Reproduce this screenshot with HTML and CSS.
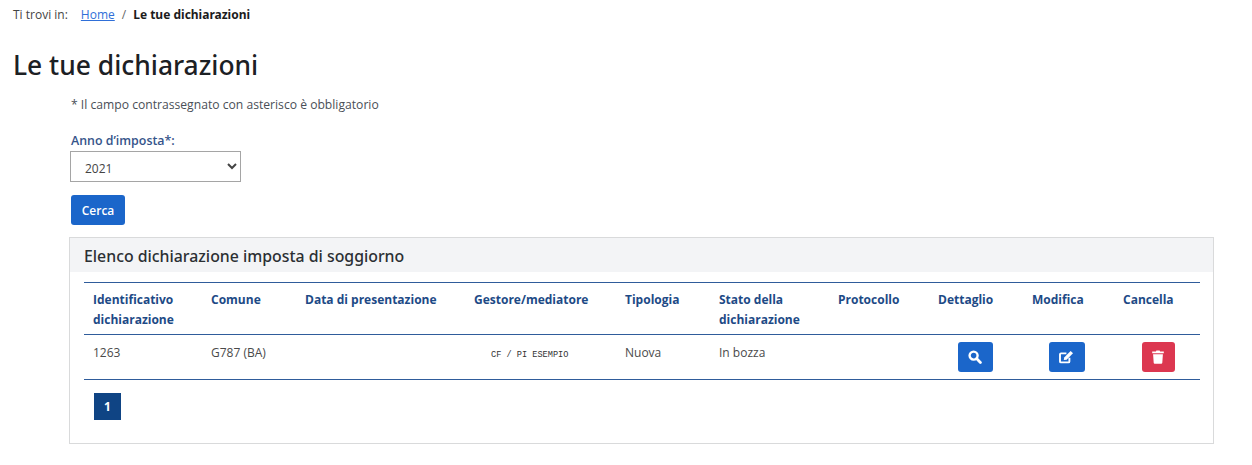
FILE: index.html
```html
<!DOCTYPE html>
<html lang="it">
<head>
<meta charset="utf-8">
<title>Le tue dichiarazioni</title>
<link rel="stylesheet" href="styles.css">
</head>
<body>
<nav class="crumbs">
  <span class="crumbs-label">Ti trovi in:</span>
  <a class="crumbs-link" href="#">Home</a>
  <span class="crumbs-sep">/</span>
  <strong class="crumbs-current">Le tue dichiarazioni</strong>
</nav>
<h1 class="title">Le tue dichiarazioni</h1>
<main class="content">
  <form class="search">
    <p class="note">* Il campo contrassegnato con asterisco è obbligatorio</p>
    <label class="field-label" for="anno">Anno d’imposta*:</label>
    <select class="field-select" id="anno"><option>2021</option></select>
    <button class="btn btn-search" type="button">Cerca</button>
  </form>
  <section class="card">
    <h2 class="card-title">Elenco dichiarazione imposta di soggiorno</h2>
    <div class="card-body">
      <table class="grid">
        <colgroup>
          <col class="c1"><col class="c2"><col class="c3"><col class="c4"><col class="c5">
          <col class="c6"><col class="c7"><col class="c8"><col class="c9"><col class="c10">
        </colgroup>
        <thead>
          <tr>
            <th>Identificativo dichiarazione</th>
            <th>Comune</th>
            <th>Data di presentazione</th>
            <th>Gestore/mediatore</th>
            <th>Tipologia</th>
            <th>Stato della dichiarazione</th>
            <th>Protocollo</th>
            <th>Dettaglio</th>
            <th>Modifica</th>
            <th>Cancella</th>
          </tr>
        </thead>
        <tbody>
          <tr>
            <td>1263</td>
            <td>G787 (BA)</td>
            <td></td>
            <td class="mono">CF / PI ESEMPIO</td>
            <td>Nuova</td>
            <td>In bozza</td>
            <td></td>
            <td class="act act-detail">
              <a class="icon-btn blue w35" href="#" aria-label="Dettaglio">
                <svg width="14" height="14" viewBox="0 0 14 14"><circle cx="5.6" cy="5.6" r="4" fill="none" stroke="#fff" stroke-width="2.4"/><path d="M8.8 8.8l3.6 3.6" stroke="#fff" stroke-width="2.8" stroke-linecap="round"/></svg>
              </a>
            </td>
            <td class="act act-edit">
              <a class="icon-btn blue w36" href="#" aria-label="Modifica">
                <svg width="15" height="14" viewBox="0 0 15 14"><path d="M10.4 7.8v3.6a1 1 0 0 1-1 1H2a1 1 0 0 1-1-1V4.4a1 1 0 0 1 1-1h5.4" fill="none" stroke="#fff" stroke-width="1.9"/><path d="M5.2 7.4L11.6.9l2.4 2.4-6.4 6.4-2.8.4z" fill="#fff"/></svg>
              </a>
            </td>
            <td class="act act-delete">
              <a class="icon-btn red w33" href="#" aria-label="Cancella">
                <svg width="12" height="14" viewBox="0 0 12 14"><path d="M.2 1.6h3.7L4.4.4h3.2l.5 1.2h3.7v1.7H.2zM1.1 4.2h9.8l-.6 8.6a1 1 0 0 1-1 .9H2.7a1 1 0 0 1-1-.9z" fill="#fff"/></svg>
              </a>
            </td>
          </tr>
        </tbody>
      </table>
      <div class="pager"><span class="page-current">1</span></div>
    </div>
  </section>
</main>
</body>
</html>
```
FILE: styles.css
```css
* { box-sizing: border-box; }
body {
  margin: 0;
  background: #fff;
  color: #333;
  font-family: "Open Sans", "Noto Sans", sans-serif;
  font-size: 12px;
}
.crumbs {
  display: flex;
  align-items: center;
  height: 15px;
  margin: 7px 0 0 13px;
  font-size: 12px;
  color: #444;
}
.crumbs-label { margin-right: 13px; }
.crumbs-link { color: #2f6fd8; }
.crumbs-sep { margin: 0 7px; color: #666; }
.crumbs-current { color: #1c1c1c; font-family: "Noto Sans", sans-serif; }
.title {
  margin: 24px 0 0 13px;
  height: 36px;
  font-family: "Noto Sans", sans-serif;
  font-size: 26.4px;
  line-height: 38px;
  font-weight: 500;
  color: #1c2024;
}
.content { padding: 0 38px 0 69px; }
.search { display: flex; flex-direction: column; align-items: flex-start; padding-left: 2px; }
.note { margin: 14px 0 0; height: 17px; line-height: 17px; font-size: 12.15px; color: #4a4f57; }
.field-label { margin-top: 19px; height: 17px; line-height: 17px; font-size: 12.4px; font-weight: 600; color: #35548a; }
.field-select {
  margin: 2px 0 0 -1px;
  width: 171px;
  height: 31px;
  padding: 3px 0 0 10px;
  border: 1px solid #a5a5a5;
  border-radius: 0;
  background: #fff;
  color: #444;
  font-family: inherit;
  font-size: 12px;
}
.btn-search {
  margin-top: 13px;
  width: 54px;
  height: 30px;
  padding: 0;
  border: 0;
  border-radius: 3px;
  background: #1b66ca;
  color: #fff;
  font-family: inherit;
  font-size: 12px;
  font-weight: 600;
}
.card {
  margin-top: 12px;
  height: 207px;
  border: 1px solid #d9dadb;
}
.card-title {
  margin: 0;
  height: 34px;
  padding-left: 14px;
  background: #f3f4f6;
  font-family: "Noto Sans", sans-serif;
  font-size: 15.85px;
  line-height: 36px;
  font-weight: 500;
  color: #2b2f33;
}
.card-body { padding: 10px 14px 0; }
.grid { width: 1116px; table-layout: fixed; border-collapse: collapse; }
.c1 { width: 118px; } .c2 { width: 94px; } .c3 { width: 169px; } .c4 { width: 151px; } .c5 { width: 94px; }
.c6 { width: 119px; } .c7 { width: 100px; } .c8 { width: 94px; } .c9 { width: 91px; } .c10 { width: 86px; }
.grid thead tr { height: 52px; border-top: 1px solid #2f5c9b; border-bottom: 1px solid #2f5c9b; }
.grid tbody tr { height: 45px; border-bottom: 1px solid #2f5c9b; }
.grid th {
  padding: 7px 9px 0;
  vertical-align: top;
  text-align: left;
  font-size: 12px;
  line-height: 20px;
  font-weight: 700;
  color: #1d4a86;
}
.grid td {
  padding: 8px 9px 0;
  vertical-align: top;
  font-size: 12px;
  line-height: 20px;
  color: #4a4a4a;
}
.grid td.mono {
  padding: 10px 0 0 26px;
  font-family: "Liberation Mono", monospace;
  font-size: 8.6px;
  color: #333;
}
.grid td.act { padding: 7px 0 0; text-align: center; }
.grid td.act-detail { padding-right: 2px; }
.grid td.act-edit { padding-right: 4px; }
.grid td.act-delete { padding-left: 2px; }
.icon-btn {
  display: inline-flex;
  align-items: center;
  justify-content: center;
  height: 30px;
  border-radius: 3px;
}
.blue { background: #1b66ca; }
.red { background: #dc3750; }
.w35 { width: 35px; }
.w36 { width: 36px; }
.w33 { width: 33px; }
.pager { display: flex; padding: 13px 0 0 10px; }
.page-current {
  width: 27px;
  height: 27px;
  background: #0f4484;
  color: #fff;
  font-size: 12px;
  font-weight: 700;
  line-height: 27px;
  text-align: center;
}
```
